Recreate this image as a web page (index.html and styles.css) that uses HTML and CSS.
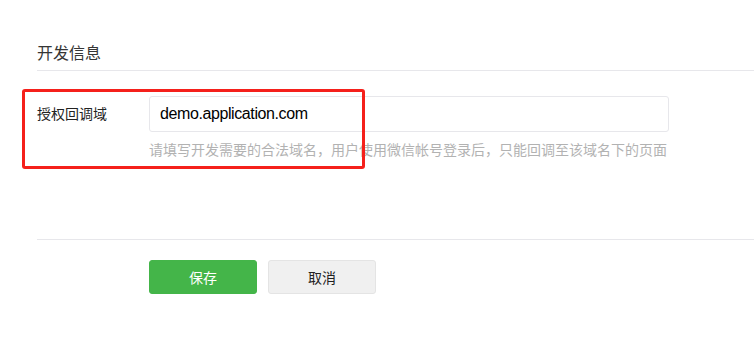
FILE: index.html
```html
<!DOCTYPE html>
<html lang="zh-CN">
<head>
    <meta charset="UTF-8">
    <meta name="viewport" content="width=device-width, initial-scale=1.0">
    <title>开发信息</title>
    <link rel="stylesheet" href="styles.css">
</head>
<body>
    <div class="page">
        <h2 class="section-title">开发信息</h2>

        <form class="dev-form" onsubmit="return false">
            <div class="field">
                <label class="field-label" for="domain">授权回调域</label>
                <div class="field-body">
                    <input type="text" id="domain" name="domain" value="demo.application.com">
                    <p class="field-tip">请填写开发需要的合法域名，用户使用微信帐号登录后，只能回调至该域名下的页面</p>
                </div>
                <!-- annotation box drawn over the field -->
                <div class="highlight"></div>
            </div>

            <div class="actions">
                <button type="submit" class="btn btn-primary">保存</button>
                <button type="button" class="btn btn-default">取消</button>
            </div>
        </form>
    </div>
</body>
</html>
```

FILE: styles.css
```css
body {
    margin: 0;
    background-color: #fff;
    font-family: "Liberation Sans", "Noto Sans CJK SC", sans-serif;
    color: #353535;
}

.page {
    padding: 42px 0 0 37px;
}

.section-title {
    margin: 0;
    padding-bottom: 4px;
    font-size: 16px;
    font-weight: normal;
    line-height: 24px;
    border-bottom: 1px solid #e7e7eb;
}

.field {
    position: relative;
    display: flex;
    margin-top: 25px;
}

.field-label {
    width: 112px;
    font-size: 14px;
    line-height: 36px;
    color: #222;
}

.field-body input {
    box-sizing: border-box;
    width: 520px;
    height: 36px;
    padding: 0 10px;
    border: 1px solid #e7e7eb;
    border-radius: 3px;
    font-family: inherit;
    font-size: 16px;
    letter-spacing: -0.4px;
    color: #000;
    outline: none;
}

.field-tip {
    margin: 8px 0 0;
    font-size: 14px;
    line-height: 20px;
    color: #b2b2b2;
}

.highlight {
    position: absolute;
    left: -15px;
    top: -7px;
    box-sizing: border-box;
    width: 343px;
    height: 80px;
    border: 3px solid #f5201b;
    border-radius: 3px;
    pointer-events: none;
}

.actions {
    display: flex;
    gap: 11px;
    margin-top: 79px;
    padding: 20px 0 0 112px;
    border-top: 1px solid #e7e7eb;
}

.btn {
    box-sizing: border-box;
    width: 108px;
    height: 34px;
    border-radius: 3px;
    font-family: inherit;
    font-size: 14px;
    cursor: pointer;
}

.btn-primary {
    border: 1px solid #44b549;
    background-color: #44b549;
    color: #fff;
}

.btn-default {
    border: 1px solid #e4e4e4;
    background-color: #f0f0f0;
    color: #222;
}
```
